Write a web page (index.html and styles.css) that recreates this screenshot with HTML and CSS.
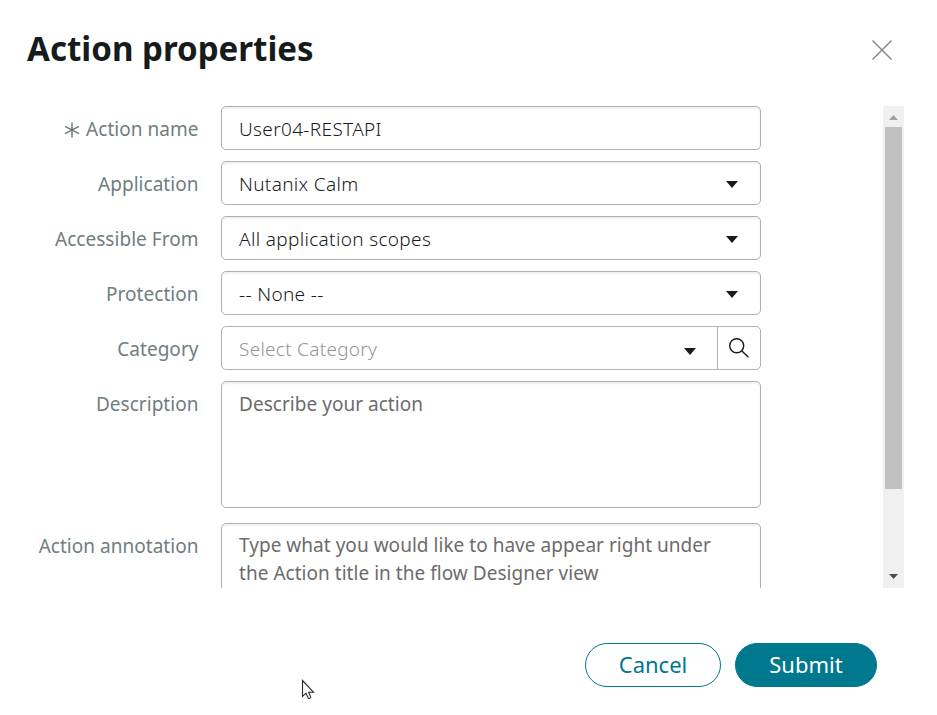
FILE: index.html
```html
<!DOCTYPE html>
<html lang="en">
<head>
<meta charset="utf-8">
<title>Action properties</title>
<link rel="stylesheet" href="styles.css">
</head>
<body>
<main class="dialog">
  <header class="header">
    <h1 class="title"><span>Action properties</span></h1>
    <svg class="close" width="22" height="22" viewBox="0 0 22 22"><path d="M1.500 1.500L20.500 20.500M20.500 1.500L1.500 20.500"/></svg>
  </header>
  <div class="body">
    <form class="form">
      <div class="row">
        <div class="label"><svg class="required" width="16" height="16" viewBox="0 0 16 16"><path d="M8 .5V15.500M1 4.300L15 11.700M15 4.300L1 11.700"/></svg><span>Action name</span></div>
        <div class="field"><span>User04-RESTAPI</span></div>
      </div>
      <div class="row">
        <div class="label"><span>Application</span></div>
        <div class="field"><span>Nutanix Calm</span><svg class="caret" width="12" height="7" viewBox="0 0 12 7"><path d="M0 0H12L6 7Z"/></svg></div>
      </div>
      <div class="row">
        <div class="label"><span>Accessible From</span></div>
        <div class="field"><span>All application scopes</span><svg class="caret" width="12" height="7" viewBox="0 0 12 7"><path d="M0 0H12L6 7Z"/></svg></div>
      </div>
      <div class="row">
        <div class="label"><span>Protection</span></div>
        <div class="field"><span>-- None --</span><svg class="caret" width="12" height="7" viewBox="0 0 12 7"><path d="M0 0H12L6 7Z"/></svg></div>
      </div>
      <div class="row">
        <div class="label"><span>Category</span></div>
        <div class="field lookup"><span class="hint">Select Category</span><svg class="caret" width="12" height="7" viewBox="0 0 12 7"><path d="M0 0H12L6 7Z"/></svg><div class="search"><svg width="20" height="20" viewBox="0 0 20 20"><circle cx="7.700" cy="7.700" r="7"/><path d="M12.700 12.700L19.400 19.200"/></svg></div></div>
      </div>
      <div class="row">
        <div class="label"><span>Description</span></div>
        <div class="field area describe">Describe your action</div>
      </div>
      <div class="row annotation">
        <div class="label"><span>Action annotation</span></div>
        <div class="field area">Type what you would like to have appear right under<br>the Action title in the flow Designer view</div>
      </div>
    </form>
    <div class="scrollbar">
      <svg class="up" width="9" height="5" viewBox="0 0 9 5"><path d="M0 5L4.500 0L9 5Z"/></svg>
      <div class="thumb"></div>
      <svg class="down" width="9" height="5" viewBox="0 0 9 5"><path d="M0 0H9L4.500 5Z"/></svg>
    </div>
  </div>
  <footer class="footer">
    <button class="button cancel">Cancel</button>
    <button class="button submit">Submit</button>
  </footer>
</main>
<svg class="cursor" width="14" height="22" viewBox="0 0 14 22"><path d="M1.500 1.500V17.500L5 14.200L7.300 19.200Q9.300 20 9.700 18L7.600 13.200H12.500Z"/></svg>
</body>
</html>
```
FILE: styles.css
```css
* { box-sizing: border-box; }
body {
  margin: 0;
  background: #fff;
  color: #161b1c;
  font-family: "Noto Sans", "Open Sans", sans-serif;
  font-size: 19px;
}
svg { flex: none; }
.dialog { width: 937px; height: 715px; overflow: hidden; }
.header {
  display: flex;
  justify-content: space-between;
  height: 106px;
  padding: 24px 44px 0 27px;
}
.title { margin: 0; font: bold 33.1px/50px "Noto Sans", sans-serif; color: #161b1c; }
.close { margin-top: 14.500px; fill: none; stroke: #7f8485; stroke-width: 1.4; }
.body { display: flex; justify-content: space-between; height: 482px; padding-right: 33px; overflow: hidden; }
.form { width: 761px; }
.row { display: flex; margin-bottom: 11px; }
.label {
  display: flex;
  flex: none;
  align-items: center;
  justify-content: flex-end;
  width: 221px;
  height: 46px;
  margin-bottom: -2px;
  padding-right: 22.500px;
  color: #6f7e80;
  letter-spacing: .03px;
  white-space: nowrap;
}
.required { margin: 1px 6px 0 0; stroke: #6b7b7d; stroke-width: 1.5; }
.field {
  display: flex;
  align-items: center;
  justify-content: space-between;
  width: 540px;
  height: 44px;
  padding: 2px 22px 0 17px;
  border: 1px solid #a9b1b2;
  border-radius: 5px;
  box-shadow: inset 0 2px 2px #f0f1f1;
  font-weight: 300;
  letter-spacing: .34px;
  color: #161b1c;
  white-space: nowrap;
}
.caret { fill: #161b1c; }
.lookup { padding: 0; padding-left: 17px; box-shadow: none; }
.lookup .hint { flex: 1; padding-top: 2px; letter-spacing: .27px; color: #919696; }
.lookup .caret { margin: 7px 21px 0 0; }
.search {
  display: flex;
  align-items: center;
  justify-content: center;
  width: 43px;
  height: 42px;
  border-left: 1px solid #a9b1b2;
}
.search svg { fill: none; stroke: #161b1c; stroke-width: 1.4; }
.area {
  display: block;
  height: 127px;
  padding: 7px 17px;
  font-weight: 400;
  letter-spacing: .03px;
  line-height: 28px;
  color: #6c6c6c;
}
.describe { padding-top: 8px; }
.annotation { margin-top: 15px; }
.scrollbar {
  display: flex;
  flex-direction: column;
  align-items: center;
  width: 21px;
  height: 482px;
  background: #f0f0f0;
}
.up { margin: 9px 0 7px; fill: #a2a2a2; }
.thumb { width: 17px; height: 362px; margin-right: 1px; background: #c0c0c0; }
.down { margin-top: auto; margin-bottom: 9px; fill: #4d4d4d; }
.footer { display: flex; justify-content: flex-end; gap: 14px; padding: 55px 60px 0 0; }
.button {
  height: 44px;
  padding: 0 0 2px;
  border: 1px solid #00788e;
  border-radius: 22px;
  font: 22px/40px "Noto Sans", "Open Sans", sans-serif;
}
.cancel { width: 136px; background: #fff; color: #00788e; }
.submit { width: 142px; background: #00788e; color: #fff; }
.cursor { position: absolute; left: 301px; top: 679px; fill: #fff; stroke: #252633; stroke-width: 1.1; }
```
